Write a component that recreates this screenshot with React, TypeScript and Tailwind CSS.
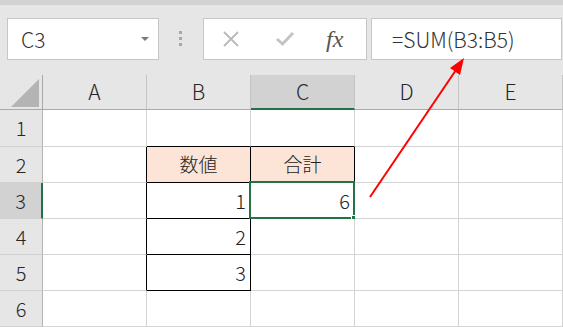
import React from "react";

type CellProps = {
  cls: string;
  children?: React.ReactNode;
};

function C({ cls, children }: CellProps) {
  return <div className={"relative flex items-center border-r border-b " + cls}>{children}</div>;
}

const N = "border-r-[#d4d4d4] border-b-[#d4d4d4] bg-white";
const RH = "border-r-[#b3b3b3] border-b-[#d0d0d0] bg-[#e6e6e6] justify-center text-[20px] text-[#262626]";
const CH = "border-r-[#c4c4c4] border-b-[#a9a9a9] bg-[#e6e6e6] justify-center text-[21px] text-[#262626]";

export default function App() {
  return (
    <div className="relative w-[563px] h-[327px] overflow-hidden bg-[#e6e6e6] font-light font-['Noto_Sans_CJK_JP','Noto_Sans',sans-serif]">
      <div className="h-[5px] bg-[#d3d3d3]" />
      <div className="flex h-[70px] items-start pt-[13px]">
        <div className="ml-[7px] flex h-[42px] w-[152px] items-center justify-between border border-[#c6c6c6] bg-white pl-[13px] pr-[9px]">
          <span className="text-[21px] leading-none text-[#333]">C3</span>
          <span className="h-0 w-0 border-x-[4px] border-t-[4px] border-x-transparent border-t-[#7a7a7a]" />
        </div>
        <div className="ml-[20px] mt-[13px] flex flex-col gap-[3px]">
          <span className="h-[3px] w-[3px] bg-[#a8a8a8]" />
          <span className="h-[3px] w-[3px] bg-[#a8a8a8]" />
          <span className="h-[3px] w-[3px] bg-[#a8a8a8]" />
        </div>
        <div className="ml-[21px] flex h-[42px] w-[164px] items-center border border-[#c6c6c6] bg-white">
          <svg width="18" height="18" viewBox="0 0 18 18" className="ml-[18px]">
            <path d="M2 2 L16 16 M16 2 L2 16" stroke="#b9b9b9" strokeWidth="1.8" fill="none" />
          </svg>
          <svg width="20" height="16" viewBox="0 0 20 16" className="ml-[35px]">
            <path d="M2 8 L7.5 13 L18 2" stroke="#c4c4c4" strokeWidth="3" fill="none" />
          </svg>
          <span className="ml-[31px] font-['Liberation_Serif',serif] text-[24px] font-normal italic leading-none text-[#555]">fx</span>
        </div>
        <div className="ml-[4px] mr-[1px] flex h-[42px] flex-1 items-center border border-[#c6c6c6] bg-white pl-[20px]">
          <span className="text-[21px] leading-none text-[#333]">=SUM(B3:B5)</span>
        </div>
      </div>

      <div className="grid grid-cols-[43px_104px_104px_104px_104px_104px] grid-rows-[35px_37px_36px_36px_36px_36px_36px]">
        <C cls="border-r-[#a9a9a9] border-b-[#a9a9a9] bg-[#e6e6e6]">
          <svg width="42" height="34" viewBox="0 0 42 34" className="absolute left-0 top-0">
            <polygon points="39,4 39,32 11,32" fill="#b4b4b4" />
          </svg>
        </C>
        <C cls={CH}>A</C>
        <C cls={CH}>B</C>
        <C cls="border-r-[#c4c4c4] border-b-[#217346] bg-[#d2d2d2] justify-center text-[21px] text-[#262626] border-b-2">C</C>
        <C cls={CH}>D</C>
        <C cls={CH}>E</C>

        <C cls={RH}>1</C>
        <C cls={N} />
        <C cls="border-r-[#d4d4d4] border-b-black bg-white" />
        <C cls="border-r-[#d4d4d4] border-b-black bg-white" />
        <C cls={N} />
        <C cls={N} />

        <C cls={RH}>2</C>
        <C cls="border-r-black border-b-[#d4d4d4] bg-white" />
        <C cls="border-r-black border-b-black bg-[#fce4d6] justify-center text-[19px] text-[#222]">数値</C>
        <C cls="border-r-black border-b-black bg-[#fce4d6] justify-center text-[19px] text-[#222]">合計</C>
        <C cls={N} />
        <C cls={N} />

        <C cls="border-r-[#217346] border-r-2 border-b-[#d0d0d0] bg-[#d2d2d2] justify-center text-[20px] text-[#262626]">3</C>
        <C cls="border-r-black border-b-[#d4d4d4] bg-white" />
        <C cls="border-r-black border-b-black bg-white justify-end pr-[4px] text-[20px] text-[#222]">1</C>
        <C cls="border-r-[#d4d4d4] border-b-[#d4d4d4] bg-white justify-end pr-[4px] text-[20px] text-[#222]">
          6
          <div className="absolute -left-[2px] -top-[2px] -right-[1px] -bottom-[1px] border-2 border-[#217346]" />
          <div className="absolute -right-[5px] -bottom-[5px] h-[8px] w-[8px] border border-white bg-[#217346]" />
        </C>
        <C cls={N} />
        <C cls={N} />

        <C cls={RH}>4</C>
        <C cls="border-r-black border-b-[#d4d4d4] bg-white" />
        <C cls="border-r-black border-b-black bg-white justify-end pr-[4px] text-[20px] text-[#222]">2</C>
        <C cls={N} />
        <C cls={N} />
        <C cls={N} />

        <C cls={RH}>5</C>
        <C cls="border-r-black border-b-[#d4d4d4] bg-white" />
        <C cls="border-r-black border-b-black bg-white justify-end pr-[4px] text-[20px] text-[#222]">3</C>
        <C cls={N} />
        <C cls={N} />
        <C cls={N} />

        <C cls={RH}>6</C>
        <C cls={N} />
        <C cls={N} />
        <C cls={N} />
        <C cls={N} />
        <C cls={N} />
      </div>

      <svg className="pointer-events-none absolute left-0 top-0" width="563" height="327" viewBox="0 0 563 327">
        <line x1="370" y1="197" x2="456" y2="70" stroke="#ff0000" strokeWidth="2" />
        <polygon points="464,58 460,75 450,68" fill="#ff0000" />
      </svg>
    </div>
  );
}
